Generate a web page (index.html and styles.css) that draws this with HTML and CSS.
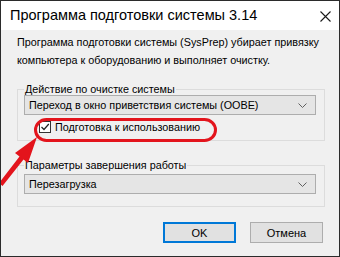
FILE: index.html
```html
<!DOCTYPE html>
<html lang="ru">
<head>
  <meta charset="UTF-8" />
  <title>Программа подготовки системы 3.14</title>
  <link rel="stylesheet" href="styles.css">
</head>
<body>
  <div class="window">
    <div class="titlebar">
      <span class="title">Программа подготовки системы 3.14</span>
      <svg class="close" width="11" height="11" viewBox="0 0 11 11">
        <path d="M0.5 0.5 L10.5 10.5 M10.5 0.5 L0.5 10.5" stroke="#1a1a1a" stroke-width="1.1" fill="none" />
      </svg>
    </div>
    <div class="content">
      <p class="desc">Программа подготовки системы (SysPrep) убирает привязку компьютера к оборудованию и выполняет очистку.</p>

      <fieldset class="group">
        <legend>Действие по очистке системы</legend>
        <div class="select">
          <span>Переход в окно приветствия системы (OOBE)</span>
          <svg width="9" height="5" viewBox="0 0 9 5"><path d="M0.5 0.5 L4.5 4.5 L8.5 0.5" stroke="#606060" fill="none" /></svg>
        </div>
        <label class="check">
          <svg class="box" width="12" height="12" viewBox="0 0 12 12">
            <rect x="0.5" y="0.5" width="11" height="11" fill="#fff" stroke="#333" />
            <path d="M2.5 6 L5 8.5 L9.8 3" stroke="#222" stroke-width="1.2" fill="none" />
          </svg>
          <span>Подготовка к использованию</span>
        </label>
      </fieldset>

      <fieldset class="group group-last">
        <legend>Параметры завершения работы</legend>
        <div class="select">
          <span>Перезагрузка</span>
          <svg width="9" height="5" viewBox="0 0 9 5"><path d="M0.5 0.5 L4.5 4.5 L8.5 0.5" stroke="#606060" fill="none" /></svg>
        </div>
      </fieldset>

      <div class="buttons">
        <button class="btn btn-default">OK</button>
        <button class="btn">Отмена</button>
      </div>
    </div>

    <!-- red annotation drawn over the dialog -->
    <svg class="markup" width="340" height="257" viewBox="0 0 340 257">
      <rect x="35.5" y="119.5" width="180" height="21" rx="11" ry="11" fill="none" stroke="#e3141c" stroke-width="3" />
      <polygon points="37,137 28,163 23.5,159.5 2.5,186 -1,183 19.5,156.5 15,153" fill="#e3141c" />
    </svg>
  </div>
</body>
</html>
```

FILE: styles.css
```css
body {
  margin: 0;
  font-family: 'Liberation Sans', Arial, sans-serif;
  font-size: 10.8px;
  color: #000;
  background: #fff;
}
.window {
  position: relative;
  width: 340px;
  height: 257px;
  box-sizing: border-box;
  border: 1px solid #2b2b2b;
  background: #f0f0f0;
  overflow: hidden;
}
.titlebar {
  display: flex;
  align-items: center;
  justify-content: space-between;
  height: 29px;
  padding: 0 8px 2px 9px;
  box-sizing: border-box;
  background: #fff;
}
.title {
  font-size: 14.5px;
}
.close {
  margin-top: 3px;
}
.content {
  padding: 3px 13px 0 16px;
}
.desc {
  margin: 0;
  font-size: 10.8px;
  line-height: 18px;
}
.group {
  margin: 14px 1px 0 0;
  padding: 0 8px 1px 6px;
  border: 1px solid #dcdcdc;
}
.group legend {
  padding: 0 1px;
  line-height: 12px;
}
.group-last {
  margin-top: 18px;
  padding-top: 3px;
  padding-bottom: 12px;
}
.select {
  display: flex;
  align-items: center;
  justify-content: space-between;
  height: 20px;
  box-sizing: border-box;
  padding: 0 8px 0 4px;
  background: #e5e5e5;
  border: 1px solid #adadad;
}
.check {
  display: flex;
  align-items: center;
  gap: 4px;
  height: 24px;
  padding-left: 15px;
}
.check .box {
  flex: none;
}
.buttons {
  display: flex;
  justify-content: flex-end;
  gap: 14px;
  margin-top: 15px;
  padding-right: 3px;
}
.btn {
  width: 73px;
  height: 21px;
  padding: 0;
  font-family: inherit;
  font-size: 11px;
  background: #e1e1e1;
  border: 1px solid #adadad;
}
.btn-default {
  border: 2px solid #0078d7;
}
.markup {
  position: absolute;
  left: -1px;
  top: -1px;
}
```
